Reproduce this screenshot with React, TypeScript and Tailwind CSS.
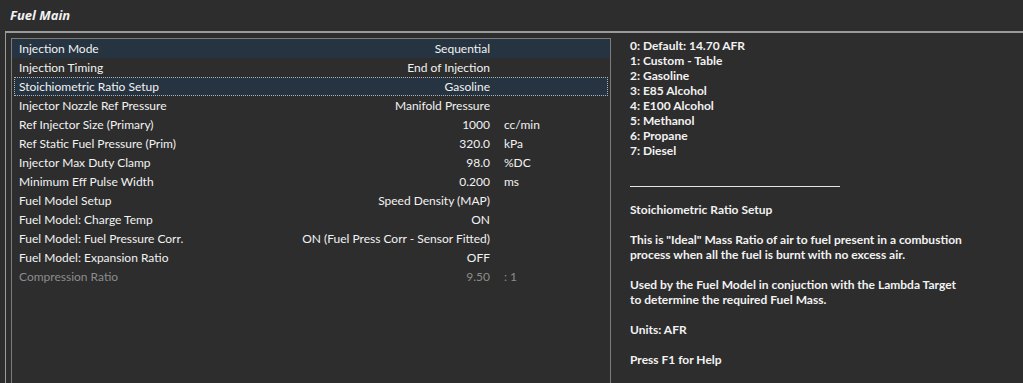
const rows: { label: string; value: string; unit?: string; kind?: 'hl' | 'focus' | 'dim' }[] = [
  { label: 'Injection Mode', value: 'Sequential', kind: 'hl' },
  { label: 'Injection Timing', value: 'End of Injection' },
  { label: 'Stoichiometric Ratio Setup', value: 'Gasoline', kind: 'focus' },
  { label: 'Injector Nozzle Ref Pressure', value: 'Manifold Pressure' },
  { label: 'Ref Injector Size (Primary)', value: '1000', unit: 'cc/min' },
  { label: 'Ref Static Fuel Pressure (Prim)', value: '320.0', unit: 'kPa' },
  { label: 'Injector Max Duty Clamp', value: '98.0', unit: '%DC' },
  { label: 'Minimum Eff Pulse Width', value: '0.200', unit: 'ms' },
  { label: 'Fuel Model Setup', value: 'Speed Density (MAP)' },
  { label: 'Fuel Model: Charge Temp', value: 'ON' },
  { label: 'Fuel Model: Fuel Pressure Corr.', value: 'ON (Fuel Press Corr - Sensor Fitted)' },
  { label: 'Fuel Model: Expansion Ratio', value: 'OFF' },
  { label: 'Compression Ratio', value: '9.50', unit: ': 1', kind: 'dim' },
];

const options = [
  '0: Default: 14.70 AFR',
  '1: Custom - Table',
  '2: Gasoline',
  '3: E85 Alcohol',
  '4: E100 Alcohol',
  '5: Methanol',
  '6: Propane',
  '7: Diesel',
];

export default function App() {
  return (
    <div
      className="w-[1023px] h-[383px] bg-[#2d2d2d] text-[#f2f2f2] overflow-hidden flex flex-col"
      style={{ fontFamily: 'Lato, "Open Sans", sans-serif' }}
    >
      {/* Title */}
      <div className="h-[31px] shrink-0 flex items-center pl-[10px]">
        <span
          className="text-[13px] font-bold italic"
          style={{ fontFamily: '"Open Sans", sans-serif' }}
        >
          Fuel Main
        </span>
      </div>

      <div className="flex-1 ml-[5px] border-t-2 border-l border-[#9a9a9a] flex pl-[5px] pt-[5px] min-h-0">
        {/* Settings list */}
        <div className="w-[600px] h-[400px] shrink-0 border border-[#7c7c7c] text-[12px]">
          {rows.map((r) => (
            <div
              key={r.label}
              className={
                'h-[19px] flex items-center relative ' +
                (r.kind === 'hl' ? 'bg-[#263340] ' : '') +
                (r.kind === 'dim' ? 'text-[#8c8c8c] ' : '')
              }
            >
              {r.kind === 'focus' && (
                <div className="absolute inset-x-[2px] inset-y-0 bg-[#263340] border border-dotted border-[#b0b0b0]" />
              )}
              <span className="relative pl-[7px] w-[260px] whitespace-nowrap">{r.label}</span>
              <span className="relative w-[218px] text-right whitespace-nowrap">{r.value}</span>
              <span className="relative pl-[14px] whitespace-nowrap">{r.unit}</span>
            </div>
          ))}
        </div>

        {/* Help panel */}
        <div className="pl-[19px] text-[12px] font-bold leading-[15px] whitespace-nowrap">
          {options.map((o) => (
            <div key={o}>{o}</div>
          ))}
          <div className="mt-[28px] w-[210px] border-t border-[#e6e6e6]" />
          <div className="mt-[15px]">Stoichiometric Ratio Setup</div>
          <div className="mt-[15px]">This is "Ideal" Mass Ratio of air to fuel present in a combustion</div>
          <div>process when all the fuel is burnt with no excess air.</div>
          <div className="mt-[15px]">Used by the Fuel Model in conjuction with the Lambda Target</div>
          <div>to determine the required Fuel Mass.</div>
          <div className="mt-[15px]">Units: AFR</div>
          <div className="mt-[15px]">Press F1 for Help</div>
        </div>
      </div>
    </div>
  );
}
